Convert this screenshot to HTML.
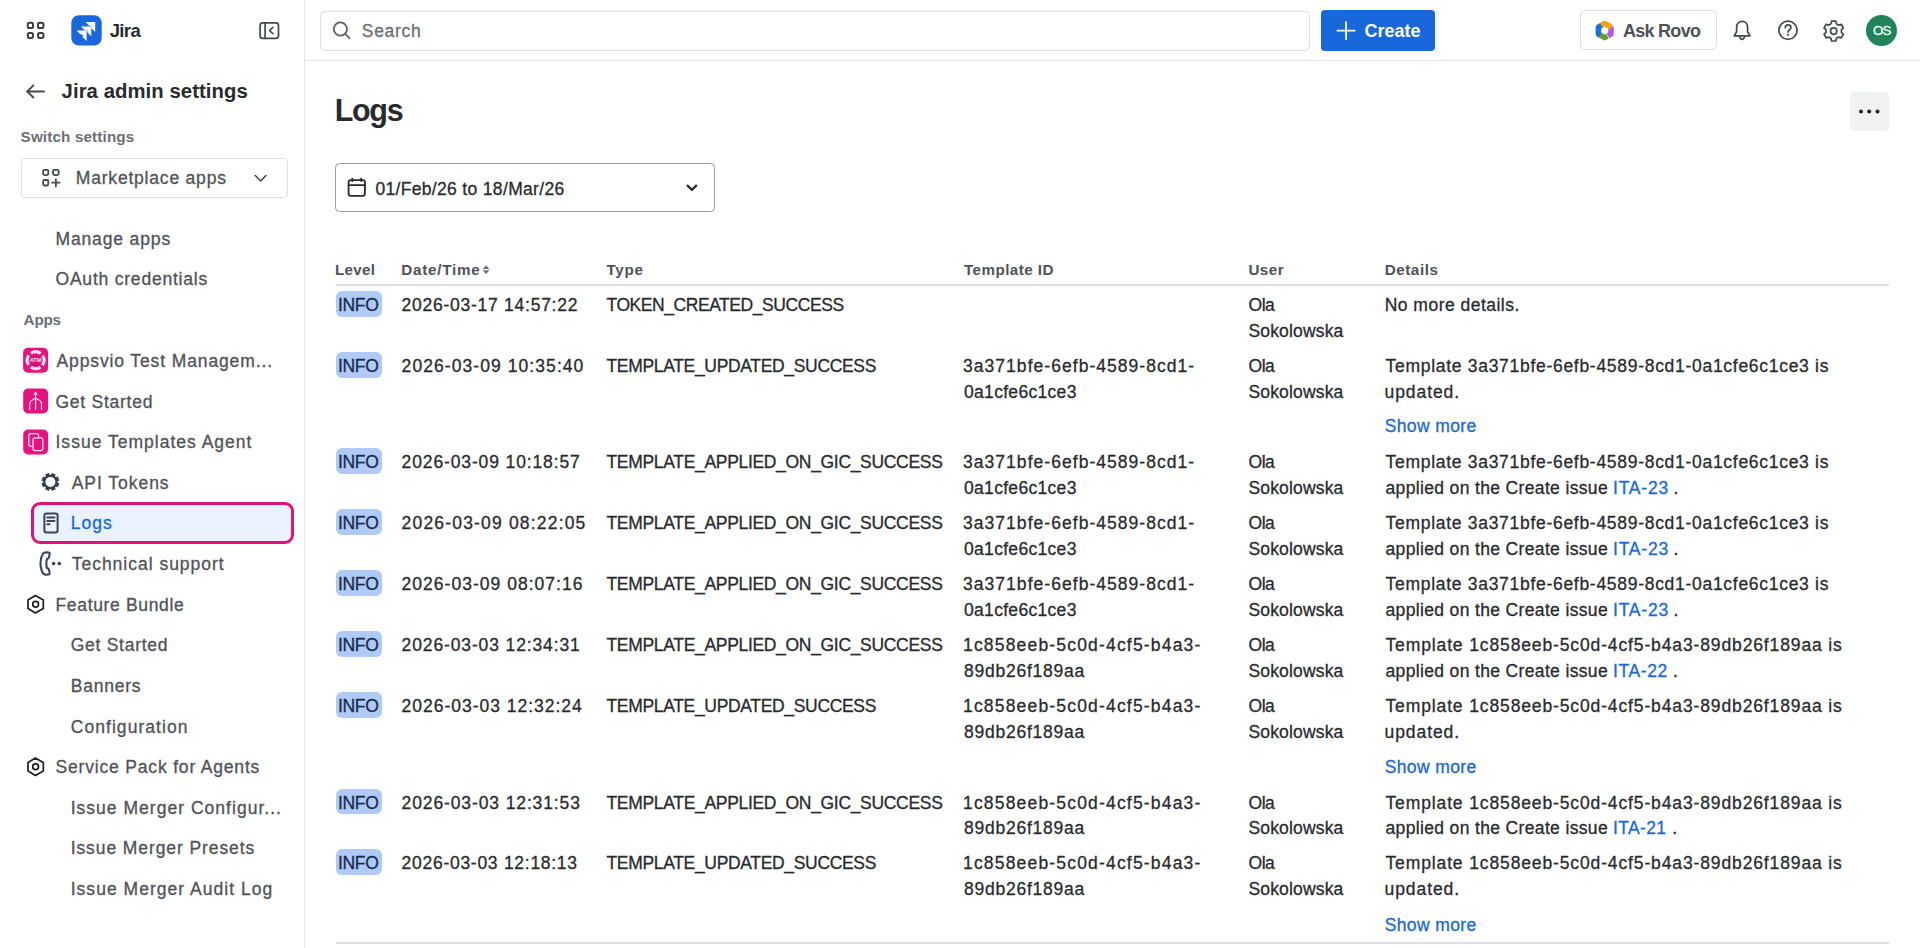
<!DOCTYPE html>
<html><head><meta charset="utf-8"><style>
html,body{margin:0;padding:0;background:#fff;width:1920px;height:948px;overflow:hidden;position:relative;font-family:"Liberation Sans", sans-serif}
.t{position:absolute;white-space:pre;line-height:20px;font-family:"Liberation Sans", sans-serif;-webkit-text-stroke:0.3px currentColor}
.b{-webkit-text-stroke:0}
.a{position:absolute}
.badge{position:absolute;left:335.7px;width:45.9px;height:25.8px;background:#AFCAF6;border-radius:6px}
svg{position:absolute;overflow:visible}
</style></head><body>
<!-- sidebar border -->
<div class=a style="left:304px;top:0;width:1.3px;height:948px;background:#E4E5E8"></div>
<!-- top nav border -->
<div class=a style="left:304px;top:59.8px;width:1616px;height:1.3px;background:#E4E5E8"></div>
<!-- search box -->
<div class=a style="left:320.2px;top:10.6px;width:987.6px;height:38px;border:1.2px solid #DDDEE1;border-radius:5px"></div>
<!-- create button -->
<div class=a style="left:1320.6px;top:10.2px;width:114.9px;height:40.6px;background:#1868DB;border-radius:4px"></div>
<!-- ask rovo -->
<div class=a style="left:1579.5px;top:10.4px;width:135.5px;height:38px;border:1.2px solid #DDDEE1;border-radius:5px"></div>
<!-- avatar -->
<div class=a style="left:1866.2px;top:15px;width:31px;height:31px;background:#1F845A;border-radius:50%"></div>
<!-- marketplace dropdown -->
<div class=a style="left:20.6px;top:157.9px;width:265.5px;height:38px;border:1.2px solid #DDDEE1;border-radius:4px"></div>
<!-- logs selected -->
<div class=a style="left:31.2px;top:502px;width:256.7px;height:36.2px;border:3.5px solid #E0127B;border-radius:9px;background:#E9F2FE"></div>
<!-- more button -->
<div class=a style="left:1849.7px;top:91.7px;width:39px;height:39px;background:#F0F1F2;border-radius:4px"></div>
<!-- date picker -->
<div class=a style="left:335px;top:162.6px;width:378.4px;height:47.3px;border:1.6px solid #9A9B9E;border-radius:4.5px"></div>
<!-- table lines -->
<div class=a style="left:335.6px;top:284.4px;width:1553px;height:2px;background:#DDDEE1"></div>
<div class=a style="left:335.6px;top:942px;width:1553px;height:2px;background:#DDDEE1"></div>
<svg width="1920" height="948" viewBox="0 0 1920 948" style="left:0;top:0" fill="none" stroke-linecap="round" stroke-linejoin="round">
<!-- app grid -->
<g stroke="#3B3D42" stroke-width="2">
<rect x="27.8" y="22.7" width="5.2" height="5.3" rx="1.6"/>
<rect x="38" y="22.7" width="5.4" height="5.3" rx="1.6"/>
<rect x="27.8" y="32.9" width="5.2" height="5" rx="1.6"/>
<rect x="38" y="32.9" width="5.4" height="5" rx="1.6"/>
</g>
<!-- jira logo -->
<rect x="71.3" y="15.2" width="30.4" height="30.2" rx="7.5" fill="#1868DB"/>
<g fill="#fff">
<path d="M85.6 22.1 L95.2 22.1 L95.2 32 L91.3 28.1 L91.3 26 L89.5 26 Z"/>
<path d="M81 26.6 L91.3 26.6 L91.3 36.3 L87.4 32.4 L87.4 30.5 L84.9 30.5 Z"/>
<path d="M76.7 30.6 L86.6 30.6 L86.6 41 L82.7 37 L82.7 34.5 L80.6 34.5 Z"/>
</g>
<!-- collapse icon -->
<g stroke="#44474D" stroke-width="1.7">
<rect x="260.1" y="22.8" width="18.4" height="15.5" rx="2.6"/>
<line x1="265.1" y1="22.8" x2="265.1" y2="38.3"/>
<path d="M272.8 27.4 L269.5 30.5 L272.8 33.6"/>
</g>
<!-- search -->
<g stroke="#5E6066" stroke-width="1.8">
<circle cx="340.4" cy="29" r="6.6"/>
<line x1="345.4" y1="34.1" x2="349.5" y2="38.2"/>
</g>
<!-- create plus -->
<g stroke="#fff" stroke-width="1.8">
<line x1="1337.5" y1="30.65" x2="1354.7" y2="30.65"/>
<line x1="1346.1" y1="22.1" x2="1346.1" y2="39.2"/>
</g>
<!-- rovo -->
<g fill="none" stroke-width="5.6" stroke-linejoin="round" stroke-linecap="butt">
<path d="M1601.9 25.1 L1598.4 27.1 L1598.4 34 L1600.6 35.3" stroke="#1D6FE0"/>
<path d="M1600.2 35.1 L1604.7 37.6 L1607.4 36.1" stroke="#63A02C"/>
<path d="M1611 26.6 L1611 34 L1607.9 35.8" stroke="#B05CE6"/>
<path d="M1601.6 25.3 L1604.7 23.5 L1611.2 27.2" stroke="#F6A40C"/>
</g>
<!-- bell -->
<g stroke="#44474D" stroke-width="1.7">
<path d="M1742.1 21.3 C1738.6 21.3 1736.6 24 1736.6 27.5 L1736.6 31.8 L1734.2 35.9 L1750 35.9 L1747.6 31.8 L1747.6 27.5 C1747.6 24 1745.6 21.3 1742.1 21.3 Z"/>
<path d="M1739.8 36.8 C1740.2 38.6 1741 39.3 1742.1 39.3 C1743.2 39.3 1744 38.6 1744.4 36.8"/>
</g>
<!-- help -->
<g stroke="#44474D" stroke-width="1.7">
<circle cx="1788" cy="30.3" r="9.1"/>
<path d="M1785.3 27.6 C1785.3 25.8 1786.5 24.8 1788.1 24.8 C1789.8 24.8 1790.9 25.9 1790.9 27.4 C1790.9 29.5 1788.1 29.6 1788.1 31.9"/>
</g>
<circle cx="1788.1" cy="34.8" r="1.1" fill="#44474D"/>
<!-- settings gear nav -->
<g stroke="#44474D" stroke-width="1.7">
<path id="g6" d="M1831.6 21.2 L1835.8 21.2 L1836.5 23.9 L1838.6 25.1 L1841.3 24.3 L1843.4 27.9 L1841.4 29.9 L1841.4 32.3 L1843.4 34.3 L1841.3 37.9 L1838.6 37.1 L1836.5 38.3 L1835.8 41 L1831.6 41 L1830.9 38.3 L1828.8 37.1 L1826.1 37.9 L1824 34.3 L1826 32.3 L1826 29.9 L1824 27.9 L1826.1 24.3 L1828.8 25.1 L1830.9 23.9 Z"/>
<circle cx="1833.7" cy="31.1" r="3.2"/>
</g>
<!-- back arrow -->
<g stroke="#44474D" stroke-width="1.8">
<path d="M33.4 85.3 L27.2 91.5 L33.4 97.5"/>
<line x1="27.5" y1="91.5" x2="44" y2="91.5"/>
</g>
<!-- marketplace icon -->
<g stroke="#44474D" stroke-width="1.8">
<rect x="43.1" y="169.9" width="5.2" height="5.2" rx="1.5"/>
<rect x="53" y="169.9" width="5.7" height="5.2" rx="1.5"/>
<rect x="43.1" y="180" width="5.2" height="5.5" rx="1.5"/>
<line x1="52.2" y1="182.7" x2="59.5" y2="182.7"/>
<line x1="55.9" y1="179.1" x2="55.9" y2="186.4"/>
</g>
<!-- marketplace chevron -->
<path d="M255.3 175.5 L260.6 181 L265.9 175.5" stroke="#44474D" stroke-width="1.6"/>
<!-- app icons -->
<rect x="23.1" y="347.7" width="25" height="25" rx="5" fill="#E8127F"/>
<circle cx="35.6" cy="360.2" r="6" fill="#D90F73"/>
<circle cx="35.6" cy="360.2" r="8.4" stroke="#FFE3F5" stroke-width="3.1" stroke-linecap="butt" stroke-dasharray="10.2 2.99" transform="rotate(55.5 35.6 360.2)"/>
<text x="35.6" y="362.3" font-family="Liberation Sans" font-size="5.6" font-weight="700" fill="#FFE3F5" text-anchor="middle">ATM</text>
<rect x="23.2" y="388.6" width="24.9" height="24.9" rx="5" fill="#E8127F"/>
<g stroke="#FFE0F4" stroke-width="1.2">
<line x1="35.6" y1="392.5" x2="35.6" y2="409.5"/>
<path d="M34.3 394.3 L35.6 392.3 L36.9 394.3"/>
<path d="M29.7 409.5 L29.7 403.5 C29.7 401 32 399.8 35.6 398.3 C39.2 399.8 41.5 401 41.5 403.5 L41.5 409.5"/>
</g>
<rect x="23.2" y="429.5" width="24.9" height="24.9" rx="5" fill="#E8127F"/>
<g stroke="#FFE0F4" stroke-width="1.3">
<rect x="28.8" y="433.6" width="9.8" height="12.8" rx="1.8"/>
<rect x="33" y="437.8" width="9.8" height="12.8" rx="1.8" fill="#E8127F"/>
</g>
<!-- api tokens gear -->
<path transform="rotate(22.5 50.4 481.9)" fill="#34404F" fill-rule="evenodd" d="M57.29 479.79 L59.27 479.85 L59.27 483.95 L57.29 484.01 L56.76 485.28 L58.12 486.72 L55.22 489.62 L53.78 488.26 L52.51 488.79 L52.45 490.77 L48.35 490.77 L48.29 488.79 L47.02 488.26 L45.58 489.62 L42.68 486.72 L44.04 485.28 L43.51 484.01 L41.53 483.95 L41.53 479.85 L43.51 479.79 L44.04 478.52 L42.68 477.08 L45.58 474.18 L47.02 475.54 L48.29 475.01 L48.35 473.03 L52.45 473.03 L52.51 475.01 L53.78 475.54 L55.22 474.18 L58.12 477.08 L56.76 478.52 Z M55.40 481.90 A5.0 5.0 0 1 0 45.40 481.90 A5.0 5.0 0 1 0 55.40 481.90 Z"/>
<!-- logs doc icon -->
<g stroke="#3B4556" stroke-width="2">
<rect x="44.4" y="513.4" width="13.2" height="19.2" rx="2"/>
<line x1="47.3" y1="517.5" x2="54.5" y2="517.5"/>
<line x1="47.3" y1="520.9" x2="54.5" y2="520.9"/>
<line x1="47.3" y1="524.2" x2="49.5" y2="524.2"/>
</g>
<!-- phone icon -->
<g stroke="#3B4556" stroke-width="2.1">
<path d="M46 552.2 L48.8 552.6 C49.6 552.8 49.8 553.6 49.6 554.5 L48.8 557.8 C48.6 558.5 47.8 558.8 47 558.7 C46.2 560.5 46.2 566.5 47 568.3 C47.8 568.2 48.6 568.5 48.8 569.2 L49.6 572.5 C49.8 573.4 49.6 574.2 48.8 574.4 L46 574.8 C41 574.5 40.5 565 40.5 563.5 C40.5 562 41 552.5 46 552.2 Z"/>
</g>
<circle cx="53.6" cy="563.6" r="1.8" fill="#3B4556"/>
<circle cx="59.3" cy="563.6" r="1.8" fill="#3B4556"/>
<!-- hexagons -->
<g stroke="#1E1F21" stroke-width="1.7">
<path d="M35.4 595.5 L43.3 600 L43.3 608.4 L35.4 612.9 L28 608.4 L28 600 Z"/>
<circle cx="35.6" cy="604.2" r="2.9"/>
<path d="M35.4 758 L43.3 762.5 L43.3 770.9 L35.4 775.4 L28 770.9 L28 762.5 Z"/>
<circle cx="35.6" cy="766.7" r="2.9"/>
</g>
<!-- more dots -->
<g fill="#1E1F21">
<circle cx="1861" cy="111.6" r="2"/>
<circle cx="1869.2" cy="111.6" r="2"/>
<circle cx="1877.5" cy="111.6" r="2"/>
</g>
<!-- calendar -->
<g stroke="#292A2E" stroke-width="1.8">
<rect x="348.6" y="180.1" width="16.3" height="15.7" rx="2"/>
<line x1="348.6" y1="185.2" x2="364.9" y2="185.2"/>
<line x1="352.3" y1="178.6" x2="352.3" y2="181"/>
<line x1="361.2" y1="178.6" x2="361.2" y2="181"/>
</g>
<!-- date chevron -->
<path d="M687.6 185.6 L691.9 189.9 L696.2 185.6" stroke="#292A2E" stroke-width="2.2"/>
<!-- sort icon -->
<g fill="#6B6E76">
<path d="M482.8 269 L486.1 265.3 L489.4 269 Z"/>
<path d="M482.8 270.2 L486.1 273.9 L489.4 270.2 Z"/>
</g>
</svg>

<div class=badge style="top:291.1px"></div><div class=badge style="top:352.1px"></div><div class=badge style="top:448.1px"></div><div class=badge style="top:509.1px"></div><div class=badge style="top:570.1px"></div><div class=badge style="top:631.1px"></div><div class=badge style="top:692.1px"></div><div class=badge style="top:788.7px"></div><div class=badge style="top:849.4px"></div>
<span class='t b' style="left:109.7px;top:20.59px;font-size:18.5px;color:#292A2E;font-weight:700;letter-spacing:-0.63px">Jira</span><span class='t b' style="left:61.6px;top:81.47px;font-size:20.3px;color:#292A2E;font-weight:700;letter-spacing:0.07px">Jira admin settings</span><span class='t b' style="left:20.6px;top:126.93px;font-size:15.2px;color:#6B6E76;font-weight:700;letter-spacing:0.16px">Switch settings</span><span class='t' style="left:75.8px;top:168.44px;font-size:17.5px;color:#505258;letter-spacing:0.8px">Marketplace apps</span><span class='t' style="left:55.5px;top:229.44px;font-size:17.5px;color:#505258;letter-spacing:0.86px">Manage apps</span><span class='t' style="left:55.5px;top:269.44px;font-size:17.5px;color:#505258;letter-spacing:0.79px">OAuth credentials</span><span class='t b' style="left:23.6px;top:309.73px;font-size:15.2px;color:#6B6E76;font-weight:700;letter-spacing:-0.17px">Apps</span><span class='t' style="left:56.5px;top:350.84px;font-size:17.5px;color:#505258;letter-spacing:0.88px">Appsvio Test Managem...</span><span class='t' style="left:55.5px;top:391.74px;font-size:17.5px;color:#505258;letter-spacing:0.74px">Get Started</span><span class='t' style="left:55.5px;top:432.24px;font-size:17.5px;color:#505258;letter-spacing:1.01px">Issue Templates Agent</span><span class='t' style="left:71.7px;top:472.74px;font-size:17.5px;color:#505258;letter-spacing:0.97px">API Tokens</span><span class='t' style="left:70.7px;top:513.24px;font-size:17.5px;color:#1868DB;letter-spacing:1px">Logs</span><span class='t' style="left:71.7px;top:553.94px;font-size:17.5px;color:#505258;letter-spacing:0.99px">Technical support</span><span class='t' style="left:55.5px;top:594.94px;font-size:17.5px;color:#505258;letter-spacing:0.66px">Feature Bundle</span><span class='t' style="left:70.7px;top:634.64px;font-size:17.5px;color:#505258;letter-spacing:0.73px">Get Started</span><span class='t' style="left:70.7px;top:676.14px;font-size:17.5px;color:#505258;letter-spacing:0.78px">Banners</span><span class='t' style="left:70.7px;top:716.64px;font-size:17.5px;color:#505258;letter-spacing:1.06px">Configuration</span><span class='t' style="left:55.5px;top:757.14px;font-size:17.5px;color:#505258;letter-spacing:0.82px">Service Pack for Agents</span><span class='t' style="left:70.7px;top:798.04px;font-size:17.5px;color:#505258;letter-spacing:1.02px">Issue Merger Configur...</span><span class='t' style="left:70.7px;top:838.24px;font-size:17.5px;color:#505258;letter-spacing:0.91px">Issue Merger Presets</span><span class='t' style="left:70.7px;top:879.04px;font-size:17.5px;color:#505258;letter-spacing:1.03px">Issue Merger Audit Log</span><span class='t' style="left:361.8px;top:21.44px;font-size:17.5px;color:#6B6E76;letter-spacing:0.68px">Search</span><span class='t b' style="left:1364.4px;top:20.76px;font-size:18px;color:#FFFFFF;font-weight:700">Create</span><span class='t b' style="left:1622.9px;top:20.76px;font-size:18px;color:#505258;font-weight:700;letter-spacing:-0.71px">Ask Rovo</span><span class='t' style="left:1872.9px;top:21.09px;font-size:13.3px;color:#F0FFF8;letter-spacing:-0.7px">OS</span><span class='t b' style="left:334.7px;top:100.03px;font-size:30.5px;color:#292A2E;font-weight:700;letter-spacing:-1.3px">Logs</span><span class='t' style="left:375.4px;top:178.64px;font-size:17.5px;color:#292A2E;letter-spacing:0.33px">01/Feb/26 to 18/Mar/26</span><span class='t b' style="left:334.9px;top:259.53px;font-size:15.2px;color:#505258;font-weight:700;letter-spacing:0.28px">Level</span><span class='t b' style="left:401.3px;top:259.53px;font-size:15.2px;color:#505258;font-weight:700;letter-spacing:0.76px">Date/Time</span><span class='t b' style="left:606.5px;top:259.53px;font-size:15.2px;color:#505258;font-weight:700;letter-spacing:0.7px">Type</span><span class='t b' style="left:964px;top:259.53px;font-size:15.2px;color:#505258;font-weight:700;letter-spacing:0.44px">Template ID</span><span class='t b' style="left:1248.4px;top:259.53px;font-size:15.2px;color:#505258;font-weight:700;letter-spacing:0.47px">User</span><span class='t b' style="left:1384.7px;top:259.53px;font-size:15.2px;color:#505258;font-weight:700;letter-spacing:0.57px">Details</span><span class='t' style="left:337.9px;top:295.14px;font-size:17.5px;color:#172B4D;letter-spacing:-0.27px">INFO</span><span class='t' style="left:401.6px;top:295.14px;font-size:17.5px;color:#292A2E;letter-spacing:0.74px">2026-03-17 14:57:22</span><span class='t' style="left:606.5px;top:295.14px;font-size:17.5px;color:#292A2E;letter-spacing:-0.44px">TOKEN_CREATED_SUCCESS</span><span class='t' style="left:1248.6px;top:295.14px;font-size:17.5px;color:#292A2E;letter-spacing:-0.5px">Ola</span><span class='t' style="left:1248.4px;top:320.64px;font-size:17.5px;color:#292A2E;letter-spacing:0.17px">Sokolowska</span><span class='t' style="left:1384.7px;top:295.14px;font-size:17.5px;color:#292A2E;letter-spacing:0.48px">No more details.</span><span class='t' style="left:337.9px;top:356.14px;font-size:17.5px;color:#172B4D;letter-spacing:-0.27px">INFO</span><span class='t' style="left:401.6px;top:356.14px;font-size:17.5px;color:#292A2E;letter-spacing:1.07px">2026-03-09 10:35:40</span><span class='t' style="left:606.5px;top:356.14px;font-size:17.5px;color:#292A2E;letter-spacing:-0.33px">TEMPLATE_UPDATED_SUCCESS</span><span class='t' style="left:1248.6px;top:356.14px;font-size:17.5px;color:#292A2E;letter-spacing:-0.5px">Ola</span><span class='t' style="left:1248.4px;top:381.64px;font-size:17.5px;color:#292A2E;letter-spacing:0.17px">Sokolowska</span><span class='t' style="left:963px;top:356.14px;font-size:17.5px;color:#292A2E;letter-spacing:1.04px">3a371bfe-6efb-4589-8cd1-</span><span class='t' style="left:964px;top:381.64px;font-size:17.5px;color:#292A2E;letter-spacing:0.31px">0a1cfe6c1ce3</span><span class='t' style="left:1385.5px;top:356.14px;font-size:17.5px;color:#292A2E;letter-spacing:0.71px">Template 3a371bfe-6efb-4589-8cd1-0a1cfe6c1ce3 is</span><span class='t' style="left:1384.5px;top:381.64px;font-size:17.5px;color:#292A2E;letter-spacing:0.93px">updated.</span><span class='t' style="left:1384.7px;top:416.24px;font-size:17.5px;color:#1868DB;letter-spacing:0.38px">Show more</span><span class='t' style="left:337.9px;top:452.14px;font-size:17.5px;color:#172B4D;letter-spacing:-0.27px">INFO</span><span class='t' style="left:401.6px;top:452.14px;font-size:17.5px;color:#292A2E;letter-spacing:0.87px">2026-03-09 10:18:57</span><span class='t' style="left:606.5px;top:452.14px;font-size:17.5px;color:#292A2E;letter-spacing:-0.32px">TEMPLATE_APPLIED_ON_GIC_SUCCESS</span><span class='t' style="left:1248.6px;top:452.14px;font-size:17.5px;color:#292A2E;letter-spacing:-0.5px">Ola</span><span class='t' style="left:1248.4px;top:477.64px;font-size:17.5px;color:#292A2E;letter-spacing:0.17px">Sokolowska</span><span class='t' style="left:963px;top:452.14px;font-size:17.5px;color:#292A2E;letter-spacing:1.04px">3a371bfe-6efb-4589-8cd1-</span><span class='t' style="left:964px;top:477.64px;font-size:17.5px;color:#292A2E;letter-spacing:0.31px">0a1cfe6c1ce3</span><span class='t' style="left:1385.5px;top:452.14px;font-size:17.5px;color:#292A2E;letter-spacing:0.71px">Template 3a371bfe-6efb-4589-8cd1-0a1cfe6c1ce3 is</span><span class='t' style="left:1385.5px;top:477.64px;font-size:17.5px;color:#292A2E;letter-spacing:0.35px">applied on the Create issue</span><span class='t' style="left:1613.1px;top:477.64px;font-size:17.5px;color:#1868DB;letter-spacing:0.76px">ITA-23</span><span class='t' style="left:1673.6px;top:477.64px;font-size:17.5px;color:#292A2E">.</span><span class='t' style="left:337.9px;top:513.14px;font-size:17.5px;color:#172B4D;letter-spacing:-0.27px">INFO</span><span class='t' style="left:401.6px;top:513.14px;font-size:17.5px;color:#292A2E;letter-spacing:1.18px">2026-03-09 08:22:05</span><span class='t' style="left:606.5px;top:513.14px;font-size:17.5px;color:#292A2E;letter-spacing:-0.32px">TEMPLATE_APPLIED_ON_GIC_SUCCESS</span><span class='t' style="left:1248.6px;top:513.14px;font-size:17.5px;color:#292A2E;letter-spacing:-0.5px">Ola</span><span class='t' style="left:1248.4px;top:538.64px;font-size:17.5px;color:#292A2E;letter-spacing:0.17px">Sokolowska</span><span class='t' style="left:963px;top:513.14px;font-size:17.5px;color:#292A2E;letter-spacing:1.04px">3a371bfe-6efb-4589-8cd1-</span><span class='t' style="left:964px;top:538.64px;font-size:17.5px;color:#292A2E;letter-spacing:0.31px">0a1cfe6c1ce3</span><span class='t' style="left:1385.5px;top:513.14px;font-size:17.5px;color:#292A2E;letter-spacing:0.71px">Template 3a371bfe-6efb-4589-8cd1-0a1cfe6c1ce3 is</span><span class='t' style="left:1385.5px;top:538.64px;font-size:17.5px;color:#292A2E;letter-spacing:0.35px">applied on the Create issue</span><span class='t' style="left:1613.1px;top:538.64px;font-size:17.5px;color:#1868DB;letter-spacing:0.76px">ITA-23</span><span class='t' style="left:1673.6px;top:538.64px;font-size:17.5px;color:#292A2E">.</span><span class='t' style="left:337.9px;top:574.14px;font-size:17.5px;color:#172B4D;letter-spacing:-0.27px">INFO</span><span class='t' style="left:401.6px;top:574.14px;font-size:17.5px;color:#292A2E;letter-spacing:1.02px">2026-03-09 08:07:16</span><span class='t' style="left:606.5px;top:574.14px;font-size:17.5px;color:#292A2E;letter-spacing:-0.32px">TEMPLATE_APPLIED_ON_GIC_SUCCESS</span><span class='t' style="left:1248.6px;top:574.14px;font-size:17.5px;color:#292A2E;letter-spacing:-0.5px">Ola</span><span class='t' style="left:1248.4px;top:599.64px;font-size:17.5px;color:#292A2E;letter-spacing:0.17px">Sokolowska</span><span class='t' style="left:963px;top:574.14px;font-size:17.5px;color:#292A2E;letter-spacing:1.04px">3a371bfe-6efb-4589-8cd1-</span><span class='t' style="left:964px;top:599.64px;font-size:17.5px;color:#292A2E;letter-spacing:0.31px">0a1cfe6c1ce3</span><span class='t' style="left:1385.5px;top:574.14px;font-size:17.5px;color:#292A2E;letter-spacing:0.71px">Template 3a371bfe-6efb-4589-8cd1-0a1cfe6c1ce3 is</span><span class='t' style="left:1385.5px;top:599.64px;font-size:17.5px;color:#292A2E;letter-spacing:0.35px">applied on the Create issue</span><span class='t' style="left:1613.1px;top:599.64px;font-size:17.5px;color:#1868DB;letter-spacing:0.76px">ITA-23</span><span class='t' style="left:1673.6px;top:599.64px;font-size:17.5px;color:#292A2E">.</span><span class='t' style="left:337.9px;top:635.14px;font-size:17.5px;color:#172B4D;letter-spacing:-0.27px">INFO</span><span class='t' style="left:401.6px;top:635.14px;font-size:17.5px;color:#292A2E;letter-spacing:0.87px">2026-03-03 12:34:31</span><span class='t' style="left:606.5px;top:635.14px;font-size:17.5px;color:#292A2E;letter-spacing:-0.32px">TEMPLATE_APPLIED_ON_GIC_SUCCESS</span><span class='t' style="left:1248.6px;top:635.14px;font-size:17.5px;color:#292A2E;letter-spacing:-0.5px">Ola</span><span class='t' style="left:1248.4px;top:660.64px;font-size:17.5px;color:#292A2E;letter-spacing:0.17px">Sokolowska</span><span class='t' style="left:963px;top:635.14px;font-size:17.5px;color:#292A2E;letter-spacing:1.18px">1c858eeb-5c0d-4cf5-b4a3-</span><span class='t' style="left:964px;top:660.64px;font-size:17.5px;color:#292A2E;letter-spacing:0.75px">89db26f189aa</span><span class='t' style="left:1385.5px;top:635.14px;font-size:17.5px;color:#292A2E;letter-spacing:0.87px">Template 1c858eeb-5c0d-4cf5-b4a3-89db26f189aa is</span><span class='t' style="left:1385.5px;top:660.64px;font-size:17.5px;color:#292A2E;letter-spacing:0.35px">applied on the Create issue</span><span class='t' style="left:1613.1px;top:660.64px;font-size:17.5px;color:#1868DB;letter-spacing:0.6px">ITA-22</span><span class='t' style="left:1673px;top:660.64px;font-size:17.5px;color:#292A2E">.</span><span class='t' style="left:337.9px;top:696.14px;font-size:17.5px;color:#172B4D;letter-spacing:-0.27px">INFO</span><span class='t' style="left:401.6px;top:696.14px;font-size:17.5px;color:#292A2E;letter-spacing:0.98px">2026-03-03 12:32:24</span><span class='t' style="left:606.5px;top:696.14px;font-size:17.5px;color:#292A2E;letter-spacing:-0.33px">TEMPLATE_UPDATED_SUCCESS</span><span class='t' style="left:1248.6px;top:696.14px;font-size:17.5px;color:#292A2E;letter-spacing:-0.5px">Ola</span><span class='t' style="left:1248.4px;top:721.64px;font-size:17.5px;color:#292A2E;letter-spacing:0.17px">Sokolowska</span><span class='t' style="left:963px;top:696.14px;font-size:17.5px;color:#292A2E;letter-spacing:1.18px">1c858eeb-5c0d-4cf5-b4a3-</span><span class='t' style="left:964px;top:721.64px;font-size:17.5px;color:#292A2E;letter-spacing:0.75px">89db26f189aa</span><span class='t' style="left:1385.5px;top:696.14px;font-size:17.5px;color:#292A2E;letter-spacing:0.87px">Template 1c858eeb-5c0d-4cf5-b4a3-89db26f189aa is</span><span class='t' style="left:1384.5px;top:721.64px;font-size:17.5px;color:#292A2E;letter-spacing:0.93px">updated.</span><span class='t' style="left:1384.7px;top:757.14px;font-size:17.5px;color:#1868DB;letter-spacing:0.38px">Show more</span><span class='t' style="left:337.9px;top:792.74px;font-size:17.5px;color:#172B4D;letter-spacing:-0.27px">INFO</span><span class='t' style="left:401.6px;top:792.74px;font-size:17.5px;color:#292A2E;letter-spacing:0.88px">2026-03-03 12:31:53</span><span class='t' style="left:606.5px;top:792.74px;font-size:17.5px;color:#292A2E;letter-spacing:-0.32px">TEMPLATE_APPLIED_ON_GIC_SUCCESS</span><span class='t' style="left:1248.6px;top:792.74px;font-size:17.5px;color:#292A2E;letter-spacing:-0.5px">Ola</span><span class='t' style="left:1248.4px;top:818.24px;font-size:17.5px;color:#292A2E;letter-spacing:0.17px">Sokolowska</span><span class='t' style="left:963px;top:792.74px;font-size:17.5px;color:#292A2E;letter-spacing:1.18px">1c858eeb-5c0d-4cf5-b4a3-</span><span class='t' style="left:964px;top:818.24px;font-size:17.5px;color:#292A2E;letter-spacing:0.75px">89db26f189aa</span><span class='t' style="left:1385.5px;top:792.74px;font-size:17.5px;color:#292A2E;letter-spacing:0.87px">Template 1c858eeb-5c0d-4cf5-b4a3-89db26f189aa is</span><span class='t' style="left:1385.5px;top:818.24px;font-size:17.5px;color:#292A2E;letter-spacing:0.35px">applied on the Create issue</span><span class='t' style="left:1613.1px;top:818.24px;font-size:17.5px;color:#1868DB;letter-spacing:0.34px">ITA-21</span><span class='t' style="left:1672.2px;top:818.24px;font-size:17.5px;color:#292A2E">.</span><span class='t' style="left:337.9px;top:853.44px;font-size:17.5px;color:#172B4D;letter-spacing:-0.27px">INFO</span><span class='t' style="left:401.6px;top:853.44px;font-size:17.5px;color:#292A2E;letter-spacing:0.72px">2026-03-03 12:18:13</span><span class='t' style="left:606.5px;top:853.44px;font-size:17.5px;color:#292A2E;letter-spacing:-0.33px">TEMPLATE_UPDATED_SUCCESS</span><span class='t' style="left:1248.6px;top:853.44px;font-size:17.5px;color:#292A2E;letter-spacing:-0.5px">Ola</span><span class='t' style="left:1248.4px;top:878.94px;font-size:17.5px;color:#292A2E;letter-spacing:0.17px">Sokolowska</span><span class='t' style="left:963px;top:853.44px;font-size:17.5px;color:#292A2E;letter-spacing:1.18px">1c858eeb-5c0d-4cf5-b4a3-</span><span class='t' style="left:964px;top:878.94px;font-size:17.5px;color:#292A2E;letter-spacing:0.75px">89db26f189aa</span><span class='t' style="left:1385.5px;top:853.44px;font-size:17.5px;color:#292A2E;letter-spacing:0.87px">Template 1c858eeb-5c0d-4cf5-b4a3-89db26f189aa is</span><span class='t' style="left:1384.5px;top:878.94px;font-size:17.5px;color:#292A2E;letter-spacing:0.93px">updated.</span><span class='t' style="left:1384.7px;top:914.64px;font-size:17.5px;color:#1868DB;letter-spacing:0.38px">Show more</span>
</body></html>
